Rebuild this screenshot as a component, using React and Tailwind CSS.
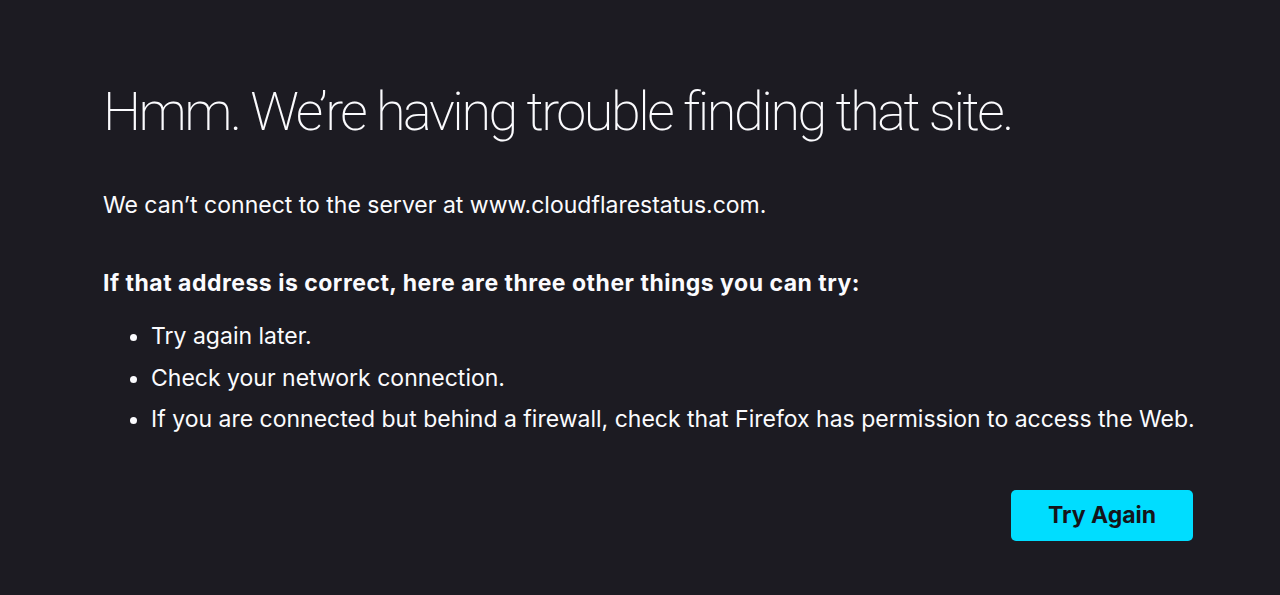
export default function App() {
  return (
    <div className="min-h-screen w-full bg-[#1c1b22] text-[#fbfbfe] font-['Inter',sans-serif]">
      <div className="pl-[103px] pr-[60px] pt-[78px]">
        {/* Title */}
        <h1 className="font-['Roboto',sans-serif] text-[54px] leading-[68px] font-extralight tracking-[-2.45px] whitespace-nowrap">
          Hmm. We’re having trouble finding that site.
        </h1>

        <p className="mt-[44px] text-[23px] leading-[30px]">
          We can’t connect to the server at www.cloudflarestatus.com.
        </p>

        <p className="mt-[48px] text-[23px] leading-[30px] font-bold tracking-[0.5px]">
          If that address is correct, here are three other things you can try:
        </p>

        <ul className="mt-[23px] pl-[48px] list-disc text-[23px] leading-[30px] flex flex-col gap-[11.5px] whitespace-nowrap">
          <li>Try again later.</li>
          <li>Check your network connection.</li>
          <li>If you are connected but behind a firewall, check that Firefox has permission to access the Web.</li>
        </ul>

        <div className="mt-[56px] pr-[27px] flex justify-end">
          <button className="w-[182px] h-[51px] rounded-[5px] bg-[#00ddff] text-[#15141a] text-[23px] font-bold">
            Try Again
          </button>
        </div>
      </div>
    </div>
  )
}
